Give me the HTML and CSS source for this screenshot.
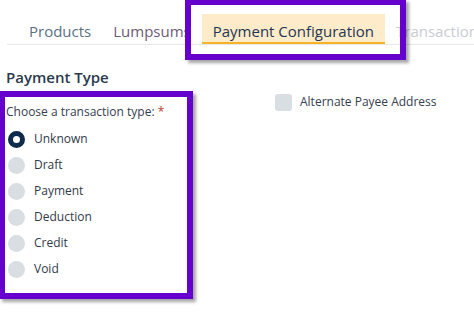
FILE: index.html
```html
<!DOCTYPE html>
<html lang="en">
<head>
<meta charset="utf-8">
<title>Payment Configuration</title>
<link rel="stylesheet" href="styles.css">
</head>
<body>
<div class="page">
  <nav class="tabbar">
    <div class="tab tab-products">Products</div>
    <div class="tab tab-lump">Lumpsums</div>
    <div class="tab tab-active">Payment Configuration</div>
    <div class="tab tab-disabled">Transactions</div>
  </nav>

  <section class="content">
    <h2 class="heading">Payment Type</h2>
    <div class="cols">
      <div class="col-left">
        <div class="field-label">Choose a transaction type: <span class="req">*</span></div>
        <div class="radios">
          <label class="radio-row"><span class="radio radio-on"></span><span class="radio-text">Unknown</span></label>
          <label class="radio-row"><span class="radio"></span><span class="radio-text">Draft</span></label>
          <label class="radio-row"><span class="radio"></span><span class="radio-text">Payment</span></label>
          <label class="radio-row"><span class="radio"></span><span class="radio-text">Deduction</span></label>
          <label class="radio-row"><span class="radio"></span><span class="radio-text">Credit</span></label>
          <label class="radio-row"><span class="radio"></span><span class="radio-text">Void</span></label>
        </div>
      </div>
      <div class="col-right">
        <label class="check-row"><span class="checkbox"></span><span class="check-text">Alternate Payee Address</span></label>
      </div>
    </div>
  </section>

  <div class="callout callout-tab"></div>
  <div class="callout callout-radios"></div>
</div>
</body>
</html>
```

FILE: styles.css
```css
* { box-sizing: border-box; }

html, body {
  margin: 0;
  padding: 0;
  background: #ffffff;
}

body {
  font-family: "Open Sans", "Noto Sans", sans-serif;
  color: #2c3a4a;
  width: 474px;
  height: 335px;
  overflow: hidden;
}

.page {
  position: relative;
  width: 474px;
  height: 335px;
}

/* Tabs */
.tabbar {
  display: flex;
  margin-left: 7px;
  padding-top: 14px;
  padding-left: 11px;
  border-bottom: 1px solid #e6e8ea;
  white-space: nowrap;
  overflow: hidden;
}

.tab {
  font-size: 15px;
  line-height: 20px;
  padding: 7px 11px 1px;
  border-bottom: 3px solid transparent;
  margin-bottom: -1px;
}

.tab-products { color: #5a6f84; }
.tab-lump { color: #6c5a74; }
.tab-active {
  color: #1e3752;
  background: #fdebc9;
  border-bottom-color: #f6b324;
}
.tab-disabled { color: #c8ccd2; }

/* Content */
.content {
  padding-left: 6px;
}

.heading {
  margin: 22px 0 0;
  font-size: 15px;
  line-height: 20px;
  font-weight: 600;
  color: #2a3a4c;
}

.cols {
  display: flex;
  margin-top: 5px;
}

.col-left {
  width: 269px;
}

.field-label {
  margin-top: 12px;
  font-size: 12px;
  line-height: 16px;
  color: #34404e;
}

.req { color: #c0392b; }

.radios {
  margin-top: 6px;
  display: flex;
  flex-direction: column;
}

.radio-row {
  display: flex;
  align-items: center;
  height: 26px;
  padding-left: 2px;
  gap: 9px;
}

.radio {
  width: 17px;
  height: 17px;
  border-radius: 50%;
  background: #d9dee3;
  flex: none;
}

.radio-on {
  background: #ffffff;
  border: 5px solid #0e2b4b;
}

.radio-text {
  font-size: 12px;
  line-height: 16px;
  color: #2f3a48;
}

.check-row {
  display: flex;
  align-items: flex-start;
  gap: 8px;
}

.checkbox {
  width: 17px;
  height: 17px;
  margin-top: 2px;
  border-radius: 3px;
  background: #d9dee3;
  flex: none;
}

.check-text {
  font-size: 12px;
  line-height: 19px;
  color: #34404e;
}

/* Annotation callouts */
.callout {
  position: absolute;
  border: 6px solid #6600cc;
  box-shadow: 3px 3px 3px rgba(0, 0, 0, 0.35);
  pointer-events: none;
}

.callout-tab {
  left: 185px;
  top: -1px;
  width: 221px;
  height: 61px;
}

.callout-radios {
  left: -1px;
  top: 91px;
  width: 194px;
  height: 208px;
}
```
